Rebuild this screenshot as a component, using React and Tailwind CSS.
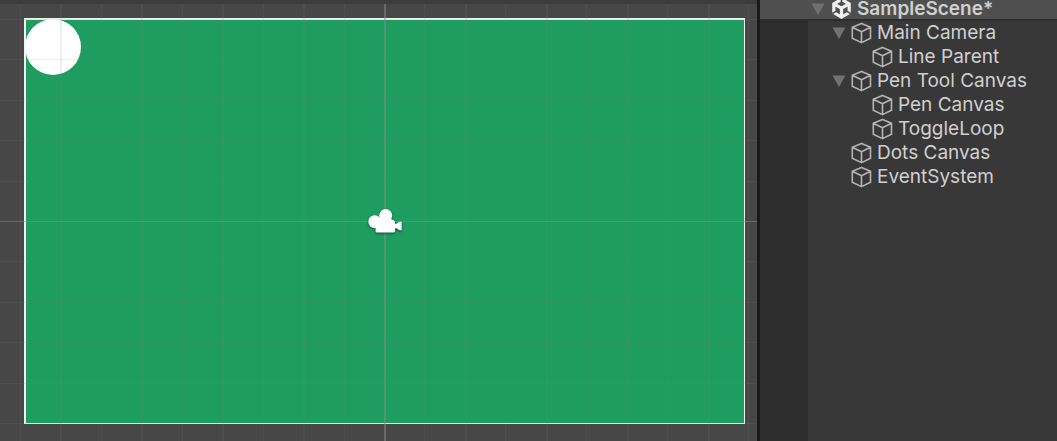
import { SiUnity } from "react-icons/si";

const GRID = 40.45;
const STEPS = [-10, -9, -8, -7, -6, -5, -4, -3, -2, -1, 1, 2, 3, 4, 5, 6, 7, 8, 9, 10];

const objects = [
  { name: "Main Camera", depth: 1, open: true },
  { name: "Line Parent", depth: 2 },
  { name: "Pen Tool Canvas", depth: 1, open: true },
  { name: "Pen Canvas", depth: 2 },
  { name: "ToggleLoop", depth: 2 },
  { name: "Dots Canvas", depth: 1 },
  { name: "EventSystem", depth: 1 },
];

function Arrow() {
  return (
    <svg viewBox="0 0 14 12" className="h-3 w-3.5" aria-hidden="true">
      <path d="M0.500 0.500H13.500L7 12Z" fill="#717171" />
    </svg>
  );
}

function Cube() {
  return (
    <svg viewBox="0 0 22 22" className="size-[22px] shrink-0" fill="none" stroke="#b4b4b4" strokeWidth="1.6" strokeLinejoin="round" aria-hidden="true">
      <path d="M10.500 1.400L19.500 5.300V16.200L10.500 20.600L1.300 16.200V5.300ZM1.300 5.300L10.500 9.800L19.500 5.300M10.500 9.800V20.600" />
    </svg>
  );
}

function CameraGizmo() {
  return (
    <svg viewBox="0 0 40 32" className="h-8 w-10 drop-shadow-[0_1px_1px_rgba(0,0,0,0.55)]" fill="#fff" aria-label="Camera">
      <circle cx="9.800" cy="16.700" r="6.500" />
      <circle cx="20.700" cy="10.500" r="6.500" />
      <path d="M11 14H26L29 15.500Q30 16 30 17V18.800H31.500L34.500 16.800H36.700V25.200H34.500L31.500 23.200H30V26Q30 27.500 28.500 27.500H12Q10.500 27.500 10.500 26Z" />
    </svg>
  );
}

function Grid() {
  return (
    <svg className="pointer-events-none absolute inset-0 size-full" aria-hidden="true">
      {STEPS.map((n) => (
        <g key={n} fill="#808080" fillOpacity="0.13">
          <rect x={Math.round(384 + n * GRID)} y="4" width={n % 2 === 0 ? 2 : 1} height="100%" />
          <rect x="0" y={Math.round(221 + n * GRID)} width="100%" height="1" />
        </g>
      ))}
      <rect x="384" y="4" width="2" height="100%" fill="#8c8c8c" fillOpacity="0.5" />
      <rect x="0" y="221" width="100%" height="1" fill="#8c8c8c" fillOpacity="0.5" />
    </svg>
  );
}

export default function App() {
  return (
    <div className="flex min-h-screen bg-[#383838] font-['Inter',sans-serif] text-[19px] leading-6 text-[#d0d0d0]">
      <main aria-label="Scene" className="relative flex min-w-0 flex-1 flex-col overflow-hidden border-t-4 border-[#3c3c3c] bg-[#474747] pt-3.5 pr-3 pb-[17px] pl-6">
        <div className="flex-1 border-t-2 border-r border-b border-l-2 border-[#f0f3ee] bg-[#1f9d60]">
          <div className="-mt-px -ml-px size-14 rounded-full bg-white" />
        </div>
        <div className="absolute inset-x-0 -top-1 bottom-0">
          <Grid />
        </div>
        <div className="absolute top-[201px] left-[365px]">
          <CameraGizmo />
        </div>
      </main>
      <aside aria-label="Hierarchy" className="flex w-[300px] shrink-0 flex-col border-l-3 border-[#191919]">
        <header className="flex h-[21px] items-end border-b-2 border-[#2d2d2d] bg-[#4f4f4f] pl-[51px]">
          <button type="button" aria-label="Collapse scene" className="flex h-5 items-center">
            <Arrow />
          </button>
          <SiUnity className="ml-1.5 size-[21px] shrink-0 text-[#f0f0f0]" aria-hidden="true" />
          <h1 className="ml-[5px] leading-5 font-semibold">SampleScene*</h1>
        </header>
        <div className="flex flex-1">
          <div className="w-12 shrink-0 bg-[#2d2d2d]" />
          <ul className="min-w-0 flex-1">
            {objects.map((o) => (
              <li key={o.name} className={o.depth === 2 ? "flex h-6 items-center pl-16" : "flex h-6 items-center pl-6"}>
                {o.depth === 1 && (
                  <span className="flex w-[19px] shrink-0">
                    {o.open && (
                      <button type="button" aria-label={"Collapse " + o.name} className="flex">
                        <Arrow />
                      </button>
                    )}
                  </span>
                )}
                <Cube />
                <span className="ml-1 whitespace-nowrap">{o.name}</span>
              </li>
            ))}
          </ul>
        </div>
      </aside>
    </div>
  );
}
